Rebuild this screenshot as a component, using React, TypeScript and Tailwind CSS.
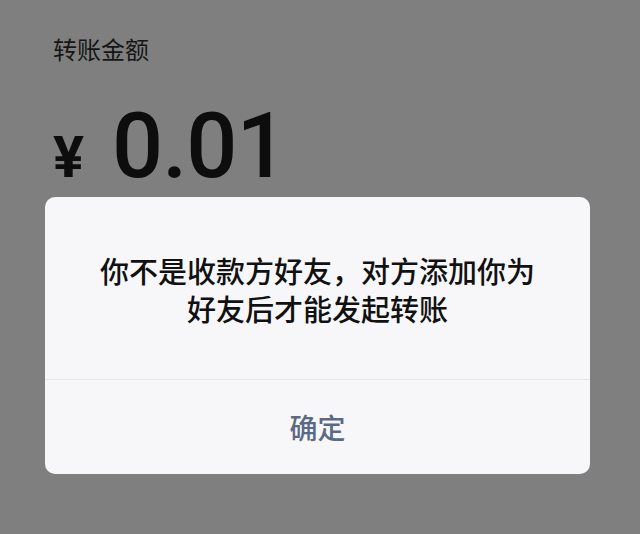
import React from "react";

export default function App() {
  return (
    <div
      className="relative w-[640px] h-[534px] overflow-hidden bg-[#7f7f7f]"
      style={{ fontFamily: '"Noto Sans CJK SC", "Noto Sans", sans-serif' }}
    >
      <div className="pl-[53px] pt-[33px]">
        <div className="text-[24px] leading-[32px] text-[#161616]">转账金额</div>
        <div className="mt-[37px] flex items-baseline">
          <span
            className="text-[58px] font-bold text-[#0d0d0d] leading-none"
            style={{ fontFamily: 'Roboto, "Noto Sans", sans-serif' }}
          >
            ¥
          </span>
          <span
            className="ml-[28px] text-[90px] font-medium text-[#0d0d0d] leading-none tracking-[-1px]"
            style={{ fontFamily: 'Roboto, "Noto Sans", sans-serif' }}
          >
            0.01
          </span>
        </div>
      </div>

      <div className="absolute left-[45px] top-[197px] w-[545px] h-[277px] rounded-[10px] bg-[#f7f7f9] flex flex-col">
        <div className="h-[182px] flex flex-col items-center justify-center pt-[2px] text-[29px] leading-[38px] font-medium text-[#111111] text-center">
          <div>你不是收款方好友，对方添加你为</div>
          <div>好友后才能发起转账</div>
        </div>
        <div className="h-px bg-[#e6e6e8]" />
        <div className="flex-1 flex items-center justify-center text-[28px] font-medium text-[#5a6a84]">
          确定
        </div>
      </div>
    </div>
  );
}
